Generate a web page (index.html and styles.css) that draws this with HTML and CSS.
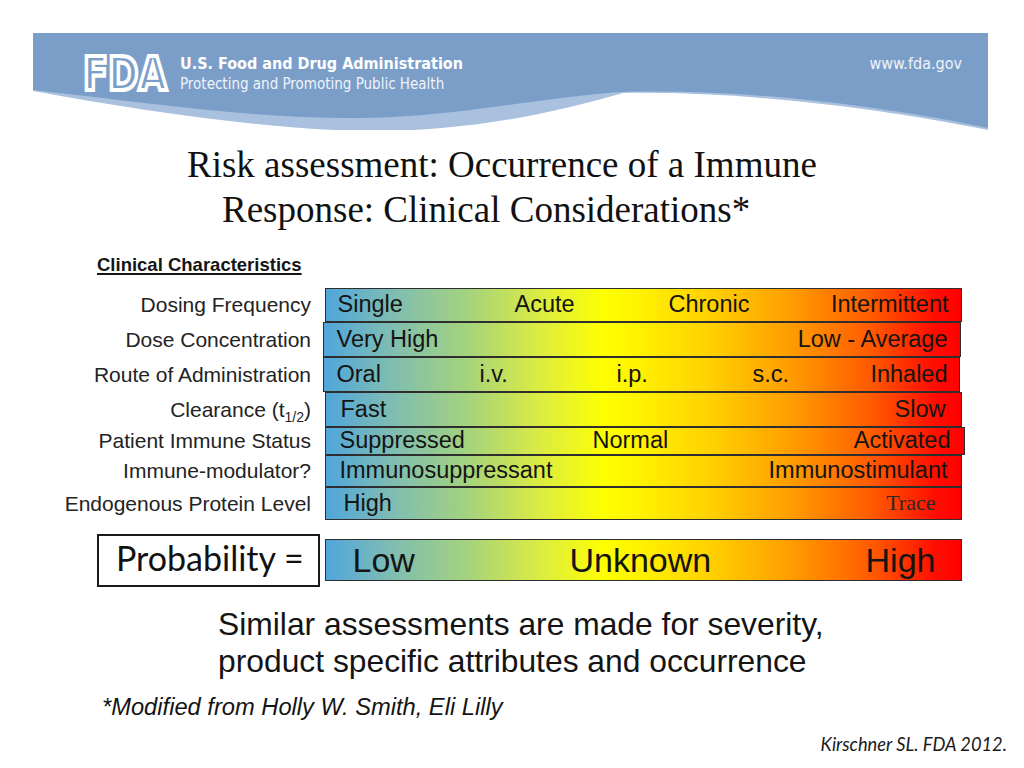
FILE: index.html
```html
<!DOCTYPE html>
<html lang="en">
<head>
<meta charset="utf-8">
<title>Risk assessment: Occurrence of a Immune Response</title>
<link rel="stylesheet" href="styles.css">
</head>
<body>
<div class="slide">
  <header class="banner">
    <svg class="banner-bg" width="955" height="97" viewBox="0 0 955 97" aria-hidden="true">
      <path class="band" d="M0,0 H955 V97 C870,80 730,58 590,60 C520,80 440,98 340,98 C250,98 120,80 0,58 Z"/>
      <path class="main" d="M0,0 H955 V95 C867,77 727,55 587,59 C487,67 417,85 317,85 C217,85 117,70 0,57 Z"/>
    </svg>
    <div class="banner-content">
      <svg class="logo" width="90" height="40" viewBox="0 0 90 40" aria-label="FDA">
        <text class="logo-text" x="3" y="37" textLength="84" lengthAdjust="spacingAndGlyphs">FDA</text>
      </svg>
      <div class="agency">
        <div class="agency-name">U.S. Food and Drug Administration</div>
        <div class="agency-tag">Protecting and Promoting Public Health</div>
      </div>
      <div class="site">www.fda.gov</div>
    </div>
  </header>

  <h1 class="title">
    <span class="t1">Risk assessment: Occurrence of a Immune</span>
    <span class="t2">Response: Clinical Considerations*</span>
  </h1>

  <div class="section-head">Clinical Characteristics</div>

  <div class="table">
    <div class="row r1">
      <div class="label"><span>Dosing Frequency</span></div>
      <div class="bar b1"><span>Single</span><span>Acute</span><span>Chronic</span><span>Intermittent</span></div>
    </div>
    <div class="row r2">
      <div class="label"><span>Dose Concentration</span></div>
      <div class="bar b2"><span>Very High</span><span>Low - Average</span></div>
    </div>
    <div class="row r3">
      <div class="label"><span>Route of Administration</span></div>
      <div class="bar b3"><span>Oral</span><span>i.v.</span><span>i.p.</span><span>s.c.</span><span>Inhaled</span></div>
    </div>
    <div class="row r4">
      <div class="label"><span>Clearance (t<sub>1/2</sub>)</span></div>
      <div class="bar b4"><span>Fast</span><span>Slow</span></div>
    </div>
    <div class="row r5">
      <div class="label"><span>Patient Immune Status</span></div>
      <div class="bar b5"><span>Suppressed</span><span>Normal</span><span>Activated</span></div>
    </div>
    <div class="row r6">
      <div class="label"><span>Immune-modulator?</span></div>
      <div class="bar b6"><span>Immunosuppressant</span><span>Immunostimulant</span></div>
    </div>
    <div class="row r7">
      <div class="label"><span>Endogenous Protein Level</span></div>
      <div class="bar b7"><span>High</span><span class="serif">Trace</span></div>
    </div>
  </div>

  <div class="prob-row">
    <div class="prob-box">Probability =</div>
    <div class="prob-bar"><span>Low</span><span>Unknown</span><span>High</span></div>
  </div>

  <p class="summary">Similar assessments are made for severity,<br>product specific attributes and occurrence</p>
  <p class="modified">*Modified from Holly W. Smith, Eli Lilly</p>
  <p class="cite">Kirschner SL. FDA 2012.</p>
</div>
</body>
</html>
```

FILE: styles.css
```css
* { box-sizing: border-box; }

html, body {
  margin: 0;
  padding: 0;
  background: #ffffff;
}

body {
  font-family: "Liberation Sans", Arial, sans-serif;
  color: #111111;
  width: 1024px;
  height: 768px;
  overflow: hidden;
}

.slide {
  padding-top: 33px;
}

/* ---------- banner ---------- */
.banner {
  display: grid;
  width: 955px;
  height: 97px;
  margin-left: 33px;
}

.banner > * {
  grid-area: 1 / 1;
}

.banner-bg .main { fill: #7b9ec9; }
.banner-bg .band { fill: #a9c1df; }

.banner-content {
  display: flex;
  align-items: flex-start;
  padding: 20px 26px 0 47px;
}

.logo { display: block; flex: none; overflow: visible; }

.logo-text {
  font-family: "DejaVu Sans", sans-serif;
  font-weight: bold;
  font-size: 46px;
  fill: #7b9ec9;
  stroke: #ffffff;
  stroke-width: 4.2px;
  stroke-linejoin: miter;
}

.agency {
  margin-left: 10px;
  padding-top: 1px;
  font-family: "DejaVu Sans Condensed", "DejaVu Sans", sans-serif;
  font-stretch: condensed;
}

.agency-name {
  font-size: 16px;
  line-height: 20px;
  font-weight: bold;
  color: #ffffff;
}

.agency-tag {
  font-size: 15px;
  line-height: 20px;
  color: #eef3f9;
}

.site {
  margin-left: auto;
  padding-top: 1px;
  font-family: "DejaVu Sans Condensed", "DejaVu Sans", sans-serif;
  font-stretch: condensed;
  font-size: 16px;
  line-height: 20px;
  color: #eef3f9;
}

/* ---------- title ---------- */
.title {
  margin: 12px 0 0 0;
  font-family: "Liberation Serif", "Times New Roman", serif;
  font-weight: normal;
  font-size: 37px;
  line-height: 45px;
  color: #111111;
}

.title span { display: block; white-space: nowrap; }
.t1 { padding-left: 187px; }
.t2 { padding-left: 222px; }

.section-head {
  margin: 21.6px 0 0 97px;
  font-weight: bold;
  font-size: 18.5px;
  line-height: 22px;
  text-decoration: underline;
  text-decoration-thickness: 1.5px;
  text-underline-offset: 2px;
  color: #151515;
}

/* ---------- table ---------- */
.table {
  margin-top: 12.4px;
  display: flex;
  flex-direction: column;
}

.row {
  display: flex;
  align-items: stretch;
}

.label {
  width: 311px;
  flex: none;
  display: flex;
  align-items: center;
  justify-content: flex-end;
  font-size: 21px;
  line-height: 1;
  color: #232323;
  white-space: nowrap;
}

.label sub {
  font-size: 14px;
  vertical-align: -5px;
  line-height: 0;
}

.bar,
.prob-bar {
  flex: none;
  border: 1.5px solid #2e2e2e;
  background: linear-gradient(to right,
    #50a6dc 0%,
    #7dbcb4 10%,
    #a3d27f 22%,
    #dcec40 34%,
    #ffff00 44%,
    #fff000 50%,
    #ffcf00 61%,
    #ff9e00 73%,
    #ff5a00 86%,
    #ff0d00 96%,
    #ff0000 100%);
  font-size: 23.5px;
  line-height: 1;
  color: #141414;
  white-space: nowrap;
  display: flex;
  align-items: center;
  justify-content: space-between;
}

.bar span { display: block; }

.r1 { height: 34px; }
.r2 { height: 35px; }
.r3 { height: 35px; }
.r4 { height: 35px; }
.r5 { height: 28px; }
.r6 { height: 32px; }
.r7 { height: 33px; }

.b1 {
  margin-left: 14px; width: 637px;
  display: grid;
  grid-template-columns: 177px 154px 1fr auto;
  padding: 0 12.5px 0 11.5px;
}

.b2 {
  margin-left: 12px; width: 638px;
  padding: 0 12.5px 0 12.5px;
}

.b3 {
  margin-left: 12px; width: 637px;
  display: grid;
  grid-template-columns: 143px 137px 136px 1fr auto;
  padding: 0 11.5px 0 12.5px;
}

.b4 {
  margin-left: 14px; width: 637px;
  padding: 0 15.5px 0 14.5px;
}

.b5 {
  margin-left: 14px; width: 640px;
  display: grid;
  grid-template-columns: 253px 1fr auto;
  padding: 0 13.5px 0 13.5px;
}

.b6 {
  margin-left: 14px; width: 637px;
  padding: 0 13.5px 0 13.5px;
}

.b7 {
  margin-left: 14px; width: 637px;
  padding: 0 25.5px 0 17.5px;
}

.bar .serif {
  font-family: "Liberation Serif", "Times New Roman", serif;
  font-size: 22px;
  color: #2a2a2a;
}

/* ---------- probability ---------- */
.prob-row {
  display: flex;
  align-items: flex-start;
  margin-top: 14px;
}

.prob-box {
  margin-left: 97px;
  width: 223px;
  height: 53px;
  border: 2px solid #1a1a1a;
  display: flex;
  align-items: center;
  padding: 0 0 4px 17px;
  font-family: "Lato", "Open Sans", sans-serif;
  font-size: 34px;
  line-height: 1;
  color: #111111;
  white-space: nowrap;
}

.prob-bar {
  margin: 5px 0 0 5px;
  width: 637px;
  height: 42px;
  font-size: 34px;
  display: grid;
  grid-template-columns: 217px 1fr auto;
  padding: 0 25.5px 0 26.5px;
}

/* ---------- notes ---------- */
.summary {
  margin: 18.6px 0 0 218px;
  font-size: 31.8px;
  line-height: 37px;
  color: #141414;
  white-space: nowrap;
}

.modified {
  margin: 13px 0 0 102px;
  font-size: 23.7px;
  line-height: 28px;
  font-style: italic;
  color: #141414;
  white-space: nowrap;
}

.cite {
  margin: 13px 17px 0 0;
  text-align: right;
  font-family: "Lato", "Open Sans", sans-serif;
  font-style: italic;
  font-size: 18.3px;
  line-height: 20px;
  color: #1a1a1a;
}
```
